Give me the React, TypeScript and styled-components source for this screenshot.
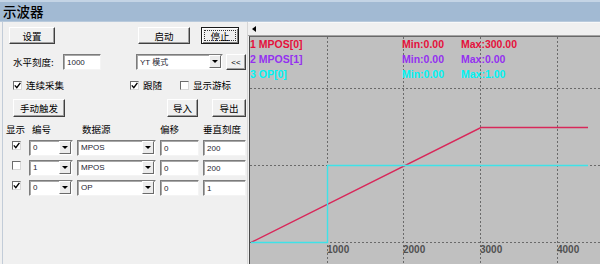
import styled, { createGlobalStyle } from 'styled-components';

const CJK = '"Noto Sans CJK SC", "Liberation Sans", sans-serif';
const LATIN = '"Liberation Sans", Arial, "Noto Sans CJK SC", sans-serif';

const GlobalStyle = createGlobalStyle`
  html, body {
    margin: 0;
    padding: 0;
    background: #f0f0f0;
  }
  body {
    width: 600px;
    height: 264px;
    overflow: hidden;
    font-family: ${CJK};
  }
`;

const channels = [
  { show: true, id: '0', source: 'MPOS', offset: '0', scale: '200' },
  { show: false, id: '1', source: 'MPOS', offset: '0', scale: '200' },
  { show: true, id: '0', source: 'OP', offset: '0', scale: '1' },
];

const traces = [
  { label: '1 MPOS[0]', min: '0.00', max: '300.00', color: '#e5103c' },
  { label: '2 MPOS[1]', min: '0.00', max: '0.00', color: '#9430f0' },
  { label: '3 OP[0]', min: '0.00', max: '1.00', color: '#00f4f4' },
];

const gridX = [77, 153, 230, 307];
const gridY = [51, 128, 205];
const ticks = ['1000', '2000', '3000', '4000'];

const Check = ({ checked }: { checked: boolean }) => (
  <Box>
    {checked && (
      <svg width="7" height="7" viewBox="0 0 7 7">
        <path d="M0.8 3.4 L2.8 5.6 L6.4 0.8" fill="none" stroke="#000" strokeWidth="1.4" />
      </svg>
    )}
  </Box>
);

const Combo = ({ w, ml = 0, value }: { w: number; ml?: number; value: string }) => (
  <ComboBox $w={w} $ml={ml}>
    <ComboText>{value}</ComboText>
    <DropButton>
      <Arrow />
    </DropButton>
  </ComboBox>
);

const App = () => {
  return (
    <>
      <GlobalStyle />
      <Window>
        <TitleBar>示波器</TitleBar>
        <Body>
          <LeftPanel>
            <Row $top={5} $h={17}>
              <Button $w={46} $ml={6}>设置</Button>
              <Button $w={52} $ml={83}>启动</Button>
              <DefaultButton $w={38} $ml={11}>
                <FocusRect>停止</FocusRect>
              </DefaultButton>
            </Row>

            <Row $top={10} $h={16}>
              <Label $w={50} $ml={10}>水平刻度:</Label>
              <Field $w={38}>1000</Field>
              <Combo w={87} ml={35} value="YT 模式" />
              <Button $w={20} $ml={3} $latin>&lt;&lt;</Button>
            </Row>

            <Row $top={10} $h={10}>
              <CheckLabel $w={117} $ml={10}>
                <Check checked />
                连续采集
              </CheckLabel>
              <CheckLabel $w={50}>
                <Check checked />
                跟随
              </CheckLabel>
              <CheckLabel>
                <Check checked={false} />
                显示游标
              </CheckLabel>
            </Row>

            <Row $top={9} $h={18}>
              <Button $w={52} $ml={10}>手动触发</Button>
              <Button $w={31} $ml={102}>导入</Button>
              <Button $w={34} $ml={14}>导出</Button>
            </Row>

            <HeaderRow>
              <HeadCell>显示</HeadCell>
              <HeadCell $pl={3}>编号</HeadCell>
              <HeadCell $pl={5}>数据源</HeadCell>
              <HeadCell>偏移</HeadCell>
              <HeadCell>垂直刻度</HeadCell>
            </HeaderRow>

            <Table>
              {channels.map((c, i) => (
                <TableRow key={i}>
                  <CheckCell>
                    <Check checked={c.show} />
                  </CheckCell>
                  <Combo w={44} value={c.id} />
                  <Combo w={79} value={c.source} />
                  <Field $w={39}>{c.offset}</Field>
                  <Field $w={43}>{c.scale}</Field>
                </TableRow>
              ))}
            </Table>
          </LeftPanel>

          <RightArea>
            <TabStrip>
              <ScrollArrow />
            </TabStrip>
            <Chart>
              <svg width="351" height="227">
                {gridX.map((x) => (
                  <line key={`v${x}`} x1={x + 0.5} y1={0} x2={x + 0.5} y2={227} stroke="#6a6a6a" strokeDasharray="2 2" />
                ))}
                {gridY.map((y) => (
                  <line key={`h${y}`} x1={0} y1={y + 0.5} x2={351} y2={y + 0.5} stroke="#6a6a6a" strokeDasharray="2 2" />
                ))}
                <polyline points="1,205.5 231,90.5 338,90.5" fill="none" stroke="#d8285a" strokeWidth="1.4" />
                <polyline points="1,205.5 77.5,205.5 77.5,128.5 338,128.5" fill="none" stroke="#3ee2e8" strokeWidth="1.4" />
                {ticks.map((t, i) => (
                  <TickText key={t} x={gridX[i]} y={216}>
                    {t}
                  </TickText>
                ))}
                {traces.map((t, i) => (
                  <g key={t.label} fill={t.color}>
                    <LegendText x={0} y={11 + i * 15}>{t.label}</LegendText>
                    <LegendText x={152} y={11 + i * 15}>Min:{t.min}</LegendText>
                    <LegendText x={211} y={11 + i * 15}>Max:{t.max}</LegendText>
                  </g>
                ))}
              </svg>
            </Chart>
          </RightArea>
        </Body>
      </Window>
    </>
  );
};

const Window = styled.div`
  width: 600px;
  height: 264px;
  display: flex;
  flex-direction: column;
  background: #f0f0f0;
`;

const TitleBar = styled.div`
  height: 22px;
  box-sizing: border-box;
  border-top: 2px solid #c4d4e5;
  border-bottom: 1px solid #b9cadc;
  background: #a2bad3;
  padding: 1px 0 0 3px;
  font: 500 13.5px/17px ${CJK};
  color: #000;
`;

const Body = styled.div`
  flex: 1;
  display: flex;
  min-height: 0;
`;

const LeftPanel = styled.div`
  width: 246px;
  margin-left: 2px;
  box-sizing: border-box;
  border-left: 1px solid #c2ccd8;
  border-right: 1px solid #d6d6d6;
  display: flex;
  flex-direction: column;
`;

const Row = styled.div<{ $top: number; $h: number }>`
  display: flex;
  align-items: center;
  margin-top: ${(p) => p.$top}px;
  height: ${(p) => p.$h}px;
`;

const Button = styled.button<{ $w: number; $ml?: number; $latin?: boolean }>`
  width: ${(p) => p.$w}px;
  height: 100%;
  margin: 0 0 0 ${(p) => p.$ml ?? 0}px;
  padding: 0;
  box-sizing: border-box;
  background: #f0f0f0;
  border: 1px solid;
  border-color: #ffffff #404040 #404040 #ffffff;
  box-shadow: inset -1px -1px 0 #a0a0a0;
  display: flex;
  align-items: center;
  justify-content: center;
  font: ${(p) => (p.$latin ? `8px ${LATIN}` : `9.5px ${CJK}`)};
  color: #000;
`;

const DefaultButton = styled(Button)`
  border: 1px solid #1a1a1a;
  box-shadow: inset 1px 1px 0 #ffffff, inset -1px -1px 0 #808080;
  padding: 2px;
`;

const FocusRect = styled.span`
  flex: 1;
  align-self: stretch;
  display: flex;
  align-items: center;
  justify-content: center;
  border: 1px dotted #333;
`;

const Label = styled.span<{ $w: number; $ml: number }>`
  width: ${(p) => p.$w}px;
  margin-left: ${(p) => p.$ml}px;
  font: 9.5px ${CJK};
  color: #000;
`;

const Field = styled.div<{ $w: number; $ml?: number }>`
  width: ${(p) => p.$w}px;
  height: 16px;
  margin-left: ${(p) => p.$ml ?? 0}px;
  box-sizing: border-box;
  background: #fff;
  border: 1px solid;
  border-color: #7c7c7c #f4f4f4 #f4f4f4 #7c7c7c;
  box-shadow: inset 1px 1px 0 #a8a8a8;
  display: flex;
  align-items: center;
  padding-left: 3px;
  font: 8px ${LATIN};
  color: #1c1c30;
`;

const ComboBox = styled(Field)`
  padding: 0 1px 1px 3px;
`;

const ComboText = styled.span`
  flex: 1;
  font: 8px ${LATIN};
  white-space: nowrap;
`;

const DropButton = styled.span`
  width: 12px;
  height: 13px;
  box-sizing: border-box;
  background: #ececec;
  border: 1px solid;
  border-color: #ffffff #6a6a6a #6a6a6a #ffffff;
  display: flex;
  align-items: center;
  justify-content: center;
`;

const Arrow = styled.span`
  width: 0;
  height: 0;
  border-left: 3px solid transparent;
  border-right: 3px solid transparent;
  border-top: 3px solid #000;
`;

const Box = styled.span`
  width: 9px;
  height: 9px;
  flex: none;
  box-sizing: border-box;
  background: #fff;
  border: 1px solid;
  border-color: #6c6c6c #d8d8d8 #d8d8d8 #6c6c6c;
  display: inline-flex;
  align-items: center;
  justify-content: center;
`;

const CheckLabel = styled.label<{ $w?: number; $ml?: number }>`
  width: ${(p) => (p.$w ? `${p.$w}px` : 'auto')};
  margin-left: ${(p) => p.$ml ?? 0}px;
  display: flex;
  align-items: center;
  gap: 4px;
  font: 9.5px ${CJK};
  color: #000;
`;

const columns = '23px 48px 83px 43px 44px';

const HeaderRow = styled.div`
  display: grid;
  grid-template-columns: ${columns};
  margin: 5px 0 0 3px;
  height: 12px;
  align-items: center;
`;

const HeadCell = styled.span<{ $pl?: number }>`
  padding-left: ${(p) => p.$pl ?? 0}px;
  font: 9.5px ${CJK};
  color: #000;
  white-space: nowrap;
`;

const Table = styled.div`
  display: flex;
  flex-direction: column;
  gap: 4px;
  margin: 6px 0 0 3px;
`;

const TableRow = styled.div`
  display: grid;
  grid-template-columns: ${columns};
  height: 16px;
`;

const CheckCell = styled.div`
  display: flex;
  align-items: flex-start;
  padding: 1px 0 0 6px;
`;

const RightArea = styled.div`
  flex: 1;
  display: flex;
  flex-direction: column;
`;

const TabStrip = styled.div`
  height: 14px;
  box-sizing: border-box;
  border-top: 1px solid #f8f8f8;
  border-bottom: 1px solid #a4a4a4;
  background: #f0f0f0;
  display: flex;
  align-items: center;
  padding-left: 4px;
`;

const ScrollArrow = styled.span`
  width: 0;
  height: 0;
  border-top: 3px solid transparent;
  border-bottom: 3px solid transparent;
  border-right: 4px solid #000;
`;

const Chart = styled.div`
  flex: 1;
  margin-left: 1px;
  border-top: 1px solid #696969;
  border-left: 1px solid #4a4a4a;
  background: #c0c0c0;
  overflow: hidden;
  svg {
    display: block;
  }
`;

const TickText = styled.text`
  font: bold 10px ${LATIN};
  fill: #505050;
`;

const LegendText = styled.text`
  font: bold 10.5px ${LATIN};
`;

export default App;
